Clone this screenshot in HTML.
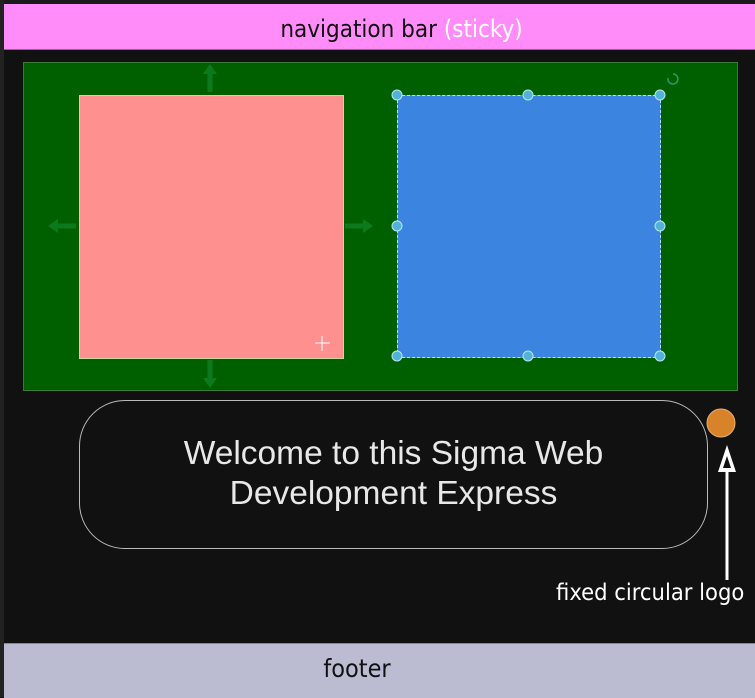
<!DOCTYPE html>
<html><head><style>
html,body{margin:0;padding:0}
body{width:755px;height:697px;background:#111;position:relative;overflow:hidden;font-family:"Liberation Sans",sans-serif}
.a{position:absolute}
.c{font-family:'DejaVu Sans Condensed',sans-serif}
</style></head><body>
<div class="a" style="left:0;top:0;width:755px;height:4px;background:#1a1a1a"></div>
<div class="a" style="left:0;top:0;width:4px;height:697px;background:#222"></div>
<div class="a" style="left:4px;top:4px;width:751px;height:45px;background:#ff8cf8;border-bottom:1px solid #777"></div>
<div class="a c" style="left:4px;top:15px;width:795px;text-align:center;font-size:24px;color:#111">navigation bar <span style="color:#fff">(sticky)</span></div>

<div class="a" style="left:23px;top:62px;width:713px;height:327px;background:#006000;border:1px solid #3a7a3a"></div>
<div class="a" style="left:79px;top:95px;width:263px;height:262px;background:#ff9090;border:1px solid #c9d8a0"></div>
<div class="a" style="left:397px;top:95px;width:262px;height:261px;background:#3b84e0;border:1px dashed #bde"></div>
<svg class="a" style="left:0;top:0" width="755" height="697">
 <g fill="#4fb4d8" stroke="#bfe3f0" stroke-width="1">
  <circle cx="397" cy="95" r="5"/><circle cx="528" cy="95" r="5"/><circle cx="660" cy="95" r="5"/>
  <circle cx="397" cy="226" r="5"/><circle cx="660" cy="226" r="5"/>
  <circle cx="397" cy="356" r="5"/><circle cx="528" cy="356" r="5"/><circle cx="660" cy="356" r="5"/>
 </g>
 <g stroke="#0c7a1c" stroke-width="5" fill="#0c7a1c">
  <line x1="210" y1="92" x2="210" y2="72"/><polygon points="203,74 217,74 210,64" stroke="none"/>
  <line x1="210" y1="360" x2="210" y2="380"/><polygon points="203,378 217,378 210,388" stroke="none"/>
  <line x1="76" y1="226" x2="56" y2="226"/><polygon points="58,219 58,233 48,226" stroke="none"/>
  <line x1="345" y1="226" x2="365" y2="226"/><polygon points="363,219 363,233 373,226" stroke="none"/>
 </g>
 <path d="M668 78 a5 5 0 1 0 5 -4" fill="none" stroke="#2a9a6a" stroke-width="1.5"/>
 <g stroke="#fff" stroke-width="1" fill="none"><path d="M322 336v15M315 343h15"/></g>
 <circle cx="721" cy="423" r="14" fill="#d8832a" stroke="#e8b070" stroke-width="1"/>
 <line x1="727" y1="462" x2="727" y2="580" stroke="#fff" stroke-width="3"/>
 <polygon points="727,445 718,472 736,472" fill="#fff"/>
 <polygon points="727,456 723,468 731,468" fill="#111"/>
</svg>
<div class="a" style="left:79px;top:400px;width:629px;height:149px;border:1px solid #bbb;border-radius:46px;box-sizing:border-box"></div>
<div class="a" style="left:79px;top:434px;width:629px;text-align:center;color:#e8e8e8;font-size:33.5px;line-height:40px">Welcome to this Sigma Web<br>Development Express</div>
<div class="a c" style="left:556px;top:578px;color:#fff;font-size:23.5px;white-space:nowrap">fixed circular logo</div>
<div class="a" style="left:4px;top:643px;width:751px;height:54px;background:#bbbbd2;border-top:1px solid #888"></div>
<div class="a c" style="left:4px;top:654px;width:706px;text-align:center;font-size:25px;color:#111">footer</div>
</body></html>
